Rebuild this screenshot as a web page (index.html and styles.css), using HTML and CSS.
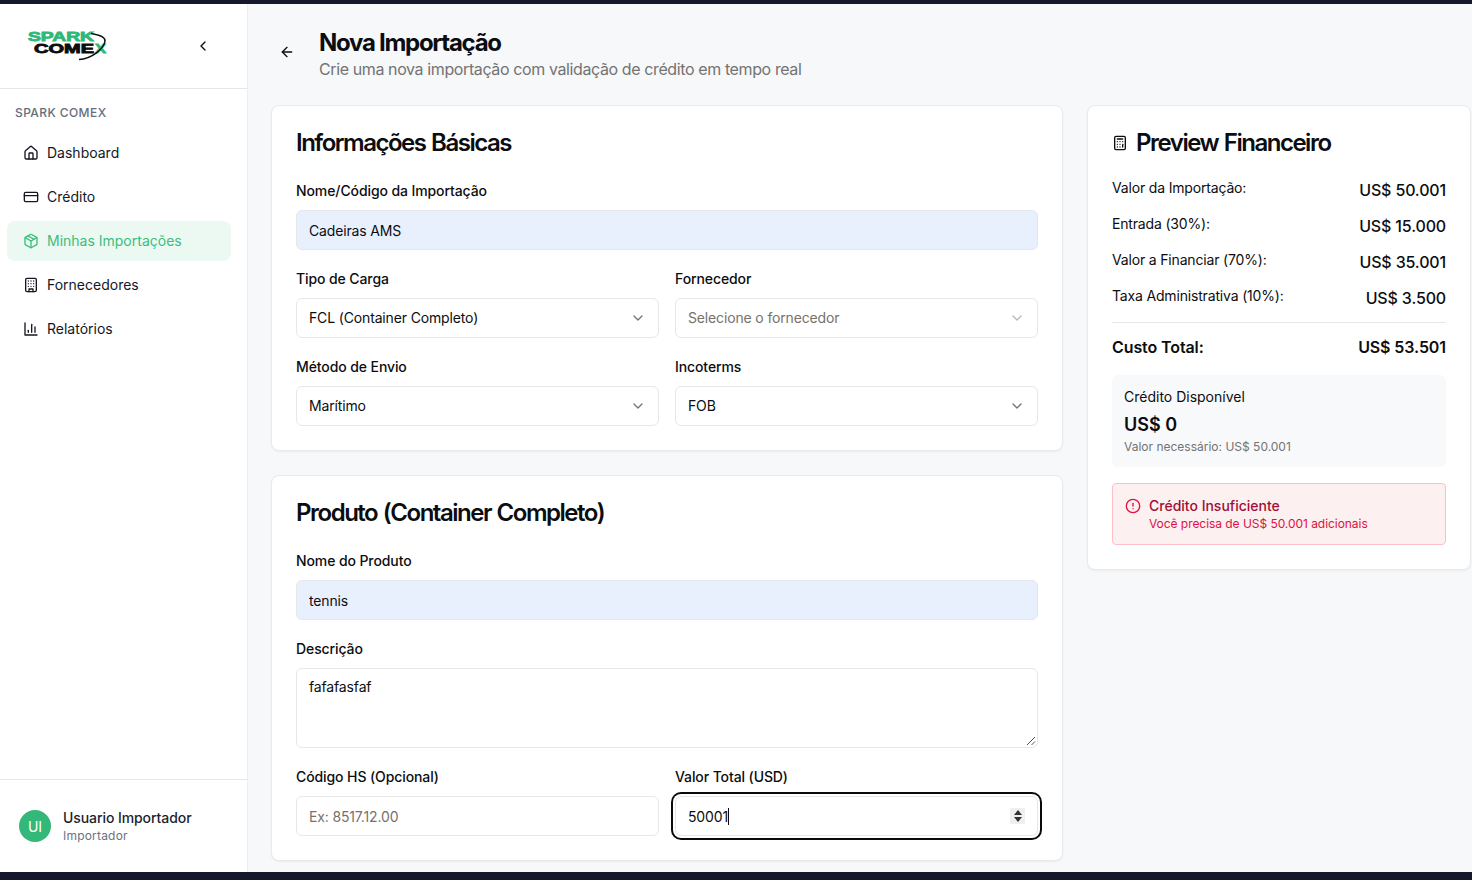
FILE: index.html
```html
<!DOCTYPE html>
<html lang="pt-BR">
<head>
	<meta charset="UTF-8">
	<title>Nova Importação</title>
	<link rel="stylesheet" href="styles.css">
</head>
<body>
	<div class="bar-top"></div>
	<div class="app">
		<aside class="sidebar">
			<div class="side-head">
				<svg class="logo" width="80" height="32" viewBox="0 0 80 32">
					<text class="logo-spark" x="0" y="10.500" textLength="66" lengthAdjust="spacingAndGlyphs">SPARK</text>
					<text class="logo-comex" x="6" y="22.500" textLength="60" lengthAdjust="spacingAndGlyphs">COME</text>
					<text class="logo-x" x="67" y="22.500" textLength="11" lengthAdjust="spacingAndGlyphs">X</text>
					<path class="logo-swoosh" d="M51 29.500C63 29 76 19 77 11C77.500 7 72 5 63 3.500"/>
				</svg>
				<svg class="icon" viewBox="0 0 24 24"><path d="m15 18-6-6 6-6"/></svg>
			</div>
			<div class="side-title">SPARK COMEX</div>
			<nav class="side-nav">
				<a class="nav-item">
					<svg class="icon" viewBox="0 0 24 24"><path d="M15 21v-8a1 1 0 0 0-1-1h-4a1 1 0 0 0-1 1v8"/><path d="M3 10a2 2 0 0 1 .709-1.528l7-5.999a2 2 0 0 1 2.582 0l7 5.999A2 2 0 0 1 21 10v9a2 2 0 0 1-2 2H5a2 2 0 0 1-2-2z"/></svg>
					<span>Dashboard</span>
				</a>
				<a class="nav-item">
					<svg class="icon" viewBox="0 0 24 24"><rect width="20" height="14" x="2" y="5" rx="2"/><line x1="2" x2="22" y1="10" y2="10"/></svg>
					<span>Crédito</span>
				</a>
				<a class="nav-item active">
					<svg class="icon" viewBox="0 0 24 24"><path d="m7.500 4.270 9 5.150"/><path d="M21 8a2 2 0 0 0-1-1.730l-7-4a2 2 0 0 0-2 0l-7 4A2 2 0 0 0 3 8v8a2 2 0 0 0 1 1.730l7 4a2 2 0 0 0 2 0l7-4A2 2 0 0 0 21 16Z"/><path d="m3.300 7 8.700 5 8.700-5"/><path d="M12 22V12"/></svg>
					<span>Minhas Importações</span>
				</a>
				<a class="nav-item">
					<svg class="icon" viewBox="0 0 24 24"><rect width="16" height="20" x="4" y="2" rx="2"/><path d="M9 22v-4h6v4"/><path d="M8 6h.01M16 6h.01M12 6h.01M12 10h.01M12 14h.01M16 10h.01M16 14h.01M8 10h.01M8 14h.01"/></svg>
					<span>Fornecedores</span>
				</a>
				<a class="nav-item">
					<svg class="icon" viewBox="0 0 24 24"><path d="M3 3v18h18"/><path d="M18 17V9"/><path d="M13 17V5"/><path d="M8 17v-3"/></svg>
					<span>Relatórios</span>
				</a>
			</nav>
			<div class="side-foot">
				<div class="avatar">UI</div>
				<div>
					<div class="user-name">Usuario Importador</div>
					<div class="user-role">Importador</div>
				</div>
			</div>
		</aside>

		<main class="main">
			<header class="page-head">
				<button class="back">
					<svg class="icon" viewBox="0 0 24 24"><path d="m12 19-7-7 7-7"/><path d="M19 12H5"/></svg>
				</button>
				<div>
					<h1>Nova Importação</h1>
					<p>Crie uma nova importação com validação de crédito em tempo real</p>
				</div>
			</header>

			<div class="columns">
				<div class="form-col">
					<section class="card">
						<h2>Informações Básicas</h2>
						<div class="fields">
							<div class="field">
								<label>Nome/Código da Importação</label>
								<div class="control filled">Cadeiras AMS</div>
							</div>
							<div class="two">
								<div class="field">
									<label>Tipo de Carga</label>
									<div class="control select"><span>FCL (Container Completo)</span><svg class="icon chev" viewBox="0 0 24 24"><path d="m6 9 6 6 6-6"/></svg></div>
								</div>
								<div class="field">
									<label>Fornecedor</label>
									<div class="control select muted"><span>Selecione o fornecedor</span><svg class="icon chev" viewBox="0 0 24 24"><path d="m6 9 6 6 6-6"/></svg></div>
								</div>
							</div>
							<div class="two">
								<div class="field">
									<label>Método de Envio</label>
									<div class="control select"><span>Marítimo</span><svg class="icon chev" viewBox="0 0 24 24"><path d="m6 9 6 6 6-6"/></svg></div>
								</div>
								<div class="field">
									<label>Incoterms</label>
									<div class="control select"><span>FOB</span><svg class="icon chev" viewBox="0 0 24 24"><path d="m6 9 6 6 6-6"/></svg></div>
								</div>
							</div>
						</div>
					</section>

					<section class="card">
						<h2>Produto (Container Completo)</h2>
						<div class="fields">
							<div class="field">
								<label>Nome do Produto</label>
								<div class="control filled">tennis</div>
							</div>
							<div class="field">
								<label>Descrição</label>
								<div class="control area">fafafasfaf
									<svg class="grip" width="10" height="10" viewBox="0 0 10 10"><path d="M1 9 9 1M5.500 9 9 5.500"/></svg>
								</div>
							</div>
							<div class="two">
								<div class="field">
									<label>Código HS (Opcional)</label>
									<div class="control muted">Ex: 8517.12.00</div>
								</div>
								<div class="field">
									<label>Valor Total (USD)</label>
									<div class="control focused"><span>50001</span><i class="caret"></i>
										<span class="spin"><b class="up"></b><b class="down"></b></span>
									</div>
								</div>
							</div>
						</div>
					</section>
				</div>

				<section class="card preview">
					<h2 class="preview-title">
						<svg class="icon" viewBox="0 0 24 24"><rect width="16" height="20" x="4" y="2" rx="2"/><line x1="8" x2="16" y1="6" y2="6"/><line x1="16" x2="16" y1="14" y2="18"/><path d="M16 10h.01M12 10h.01M8 10h.01M12 14h.01M8 14h.01M12 18h.01M8 18h.01"/></svg>
						Preview Financeiro
					</h2>
					<div class="rows">
						<div class="row"><span>Valor da Importação:</span><strong>US$ 50.001</strong></div>
						<div class="row"><span>Entrada (30%):</span><strong>US$ 15.000</strong></div>
						<div class="row"><span>Valor a Financiar (70%):</span><strong>US$ 35.001</strong></div>
						<div class="row"><span>Taxa Administrativa (10%):</span><strong>US$ 3.500</strong></div>
					</div>
					<div class="total"><span>Custo Total:</span><span>US$ 53.501</span></div>
					<div class="credit">
						<div class="credit-label">Crédito Disponível</div>
						<div class="credit-value">US$ 0</div>
						<div class="credit-note">Valor necessário: US$ 50.001</div>
					</div>
					<div class="alert">
						<svg class="icon" viewBox="0 0 24 24"><circle cx="12" cy="12" r="10"/><line x1="12" x2="12" y1="8" y2="12"/><line x1="12" x2="12.010" y1="16" y2="16"/></svg>
						<div>
							<div class="alert-title">Crédito Insuficiente</div>
							<div class="alert-text">Você precisa de US$ 50.001 adicionais</div>
						</div>
					</div>
				</section>
			</div>
		</main>
	</div>
	<div class="bar-bottom"></div>
</body>
</html>
```

FILE: styles.css
```css
* {margin: 0; padding: 0; box-sizing: border-box;}
html, body {height: 100%; overflow: hidden;}
body {font-family: Inter, "Noto Sans", sans-serif; font-size: 14px; color: #0c0d10; background: #f7f8fa; display: flex; flex-direction: column;}
.bar-top {height: 4px; background: #14182a; flex: none;}
.bar-bottom {height: 8px; background: #14182a; flex: none;}
.app {flex: 1; display: flex; min-height: 0;}
.icon {width: 16px; height: 16px; fill: none; stroke: currentColor; stroke-width: 2; stroke-linecap: round; stroke-linejoin: round; flex: none;}

/* sidebar */
.sidebar {width: 248px; flex: none; background: #fff; border-right: 1px solid #eceef1; display: flex; flex-direction: column;}
.side-head {height: 85px; border-bottom: 1px solid #e4e6ea; padding: 0 36px 0 28px; display: flex; align-items: center; justify-content: space-between; flex: none;}
.logo {overflow: visible;}
.logo-spark, .logo-comex, .logo-x {font: 900 12px "Liberation Sans", sans-serif; stroke-width: .8;}
.logo-spark, .logo-x {fill: #2fb87a; stroke: #2fb87a;}
.logo-comex {fill: #0d0d0d; stroke: #0d0d0d;}
.logo-swoosh {fill: none; stroke: #0d0d0d; stroke-width: 1.500;}
.side-title {font-size: 12px; font-weight: 500; letter-spacing: .42px; color: #666d7c; padding: 16px 15px 8px; line-height: 16px;}
.side-nav {padding: 4px 16px 0 7px; display: flex; flex-direction: column; gap: 4px; flex: 1;}
.nav-item {height: 40px; padding: 0 16px; display: flex; align-items: center; gap: 8px; border-radius: 8px; color: #14171f; font-size: 14px;}
.nav-item span {margin-top: -2px;}
.nav-item.active {background: #ebf9f2; color: #3dbd7d;}
.side-foot {height: 93px; border-top: 1px solid #e4e6ea; padding: 0 19px; display: flex; align-items: center; gap: 12px; flex: none;}
.avatar {width: 32px; height: 32px; border-radius: 50%; background: #34b879; color: #fff; display: flex; align-items: center; justify-content: center; font-size: 14px;}
.user-name {font-size: 14px; font-weight: 450; line-height: 20px; color: #1a1f2e; letter-spacing: -.08px;}
.user-role {font-size: 12px; line-height: 16px; color: #6b7280; letter-spacing: .2px;}

/* main */
.main {flex: 1; min-width: 0; padding: 24px 1px 0 23px;}
.page-head {display: flex; gap: 16px; align-items: flex-start; margin-bottom: 24px;}
.back {width: 32px; height: 32px; margin-top: 8px; border: 0; background: none; color: #0c0d10; display: flex; align-items: center; justify-content: center;}
h1 {font-size: 24px; line-height: 28px; font-weight: 700; letter-spacing: -1.28px; padding-top: 1px;}
.page-head p {font-size: 16px; line-height: 24px; color: #737373; letter-spacing: -.39px;}
.columns {display: flex; gap: 24px; align-items: flex-start;}
.form-col {width: 792px; flex: none; display: flex; flex-direction: column; gap: 24px;}
.card {background: #fff; border: 1px solid #e9eaed; border-radius: 8px; padding: 24px; box-shadow: 0 1px 2px rgba(0,0,0,.05);}
h2 {font-size: 24px; line-height: 26px; font-weight: 600; letter-spacing: -1.48px; word-spacing: 1px; color: #0c0d10;}
.fields {margin-top: 25px; display: flex; flex-direction: column; gap: 19px;}
.two {display: grid; grid-template-columns: 1fr 1fr; gap: 16px;}
label {display: block; font-size: 14px; font-weight: 450; line-height: 20px; margin-bottom: 9px; letter-spacing: -.1px;}
.control {height: 40px; border: 1px solid #e5e7eb; border-radius: 6px; padding: 0 12px; display: flex; align-items: center; font-size: 14px; background: #fff; letter-spacing: -.15px;}
.control.filled {background: #e8f0fe;}
.control.muted {color: #78716c;}
.control.select {justify-content: space-between;}
.control.select span {margin-top: -2px;}
.chev {color: #78716c;}
.muted .chev {opacity: .5;}
.control.area {height: 80px; align-items: flex-start; padding-top: 9px; position: relative;}
.grip {position: absolute; right: 1px; bottom: 1px; stroke: #555; stroke-width: 1; fill: none;}
.control.focused {box-shadow: 0 0 0 2px #fff, 0 0 0 4px #0a0a0a;}
.caret {width: 1px; height: 17px; background: #0a0a0a;}
.spin {margin-left: auto; width: 15px; height: 16px; background: #efefef; display: flex; flex-direction: column; align-items: center; justify-content: center; gap: 2px;}
.up {border: 4px solid transparent; border-top: 0; border-bottom: 5px solid #333;}
.down {border: 4px solid transparent; border-bottom: 0; border-top: 5px solid #333;}

/* preview */
.preview {width: 384px; flex: none;}
.preview-title {display: flex; align-items: center; gap: 8px;}
.rows {margin-top: 22px; display: flex; flex-direction: column; gap: 12px;}
.row {display: flex; justify-content: space-between; height: 24px; font-size: 14px;}
.row span {line-height: 20px; letter-spacing: -.17px;}
.row strong {font-size: 16px; font-weight: 450; line-height: 24px; letter-spacing: -.15px;}
.total {margin-top: 12px; border-top: 1px solid #e4e6ea; padding-top: 12px; height: 53px; display: flex; justify-content: space-between; font-size: 16px; font-weight: 600; line-height: 24px; letter-spacing: -.1px;}
.credit {background: #f8f9fb; border-radius: 6px; padding: 12px; height: 92px;}
.credit-label {line-height: 20px;}
.credit-value {font-size: 18px; font-weight: 600; line-height: 28px; margin-top: 4px;}
.credit-note {font-size: 12px; line-height: 16px; color: #737373;}
.alert {margin-top: 16px; height: 62px; background: #fcf0f1; border: 1px solid #fcc0c6; border-radius: 4px; padding: 13px 12px; display: flex; gap: 8px; color: #e0103f;}
.alert .icon {margin-top: 1px;}
.alert-title {font-weight: 450; line-height: 18px; color: #9f0f35;}
.alert-text {font-size: 12px; line-height: 16px; margin-top: 1px; letter-spacing: -.05px;}
```
